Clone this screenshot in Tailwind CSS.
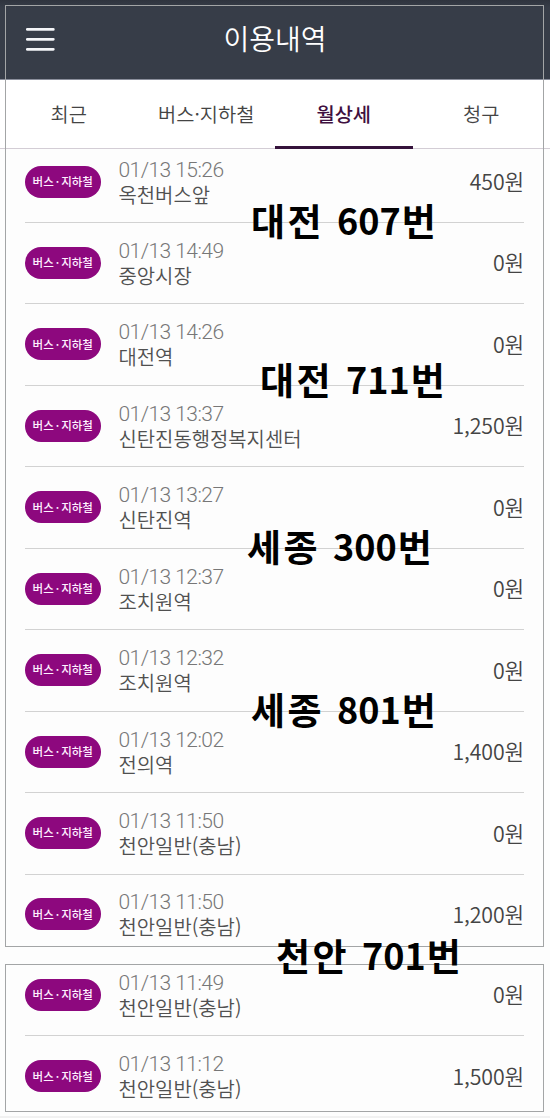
<!DOCTYPE html>
<html lang="ko">
<head>
<meta charset="utf-8">
<title>이용내역</title>
<script src="https://cdn.jsdelivr.net/npm/@tailwindcss/browser@4"></script>
</head>
<body class="bg-white font-['Noto_Sans_CJK_KR',sans-serif]">
<div class="relative h-[1118px] w-[550px] overflow-hidden bg-[#fdfdfd]">
  <header class="relative flex h-20 items-center justify-center border-b border-[#8b8f9c] bg-linear-to-b from-[#2f343e] from-0% via-[#373d48] via-10% to-[#373d48] pb-[3px]">
    <svg class="absolute left-[26px] top-[27px]" width="29" height="25" viewBox="0 0 29 25" stroke="#f4f5f8" stroke-width="2.8" stroke-linecap="round"><path d="M1.3 2.4H27.3M1.3 12.3H27.3M1.3 22.3H27.3"/></svg>
    <h1 class="text-[28px] leading-none font-[350] text-white">이용내역</h1>
  </header>
  <nav class="flex h-[69px] border-b border-[#d3cdd5] bg-white text-[19.8px] text-[#444]">
    <div class="flex w-[137.5px] items-center justify-center font-[350]">최근</div>
    <div class="flex w-[137.5px] items-center justify-center font-[350]">버스·지하철</div>
    <div class="relative flex w-[137.5px] items-center justify-center font-medium text-[#3f1040]">월상세<span class="absolute inset-x-0 -bottom-px h-[3px] bg-[#35123b]"></span></div>
    <div class="flex w-[137.5px] items-center justify-center font-[350]">청구</div>
  </nav>
  <main class="pl-[25px] pr-[26px]">
    <section id="first" class="h-[806px]"></section>
    <section id="second" class="h-[163px]"></section>
  </main>
  <div class="pointer-events-none absolute left-[5px] top-[5px] h-[942px] w-[539px] border border-[#a3a5a6]"></div>
  <div class="pointer-events-none absolute left-[5px] top-[964px] h-[148px] w-[539px] border border-[#a3a5a6]"></div>
  <div class="absolute inset-x-0 bottom-0 h-0.5 bg-[#f1f1f1]"></div>
  <div id="notes"></div>
</div>
<script>
const row = ([time, name, fee], cls) => `
<div class="${cls}">
  <span class="flex h-8 w-[75.5px] shrink-0 items-center justify-center rounded-full bg-[#8d087e] text-[11.5px] font-medium leading-none text-[#fff0ff]"><span class="whitespace-pre">버스<span class="mx-[2px]">·</span>지하철</span></span>
  <span class="ml-[18px] -mb-[9px] flex grow flex-col">
    <span class="font-[Roboto] text-[21px] leading-[25px] font-light tracking-[-0.55px] text-[#777]">${time}</span>
    <span class="text-[19.9px] leading-[24px] font-[350] text-[#505050]">${name}</span>
  </span>
  <span class="relative -top-[0.5px] text-[21.3px] leading-8 font-[350] tracking-[-0.1px] text-[#444]">${fee}</span>
</div>`;
const normal = "flex h-[81.45px] items-end border-b border-[#d2d2d2] pb-[24.5px]";
const top1 = "flex h-[74px] items-end border-b border-[#d2d2d2] pb-[24.5px]";
const last = "flex h-[81.4px] items-end pb-[25.5px]";
const a = [
  ["01/13 15:26","옥천버스앞","450원"],["01/13 14:49","중앙시장","0원"],["01/13 14:26","대전역","0원"],
  ["01/13 13:37","신탄진동행정복지센터","1,250원"],["01/13 13:27","신탄진역","0원"],["01/13 12:37","조치원역","0원"],
  ["01/13 12:32","조치원역","0원"],["01/13 12:02","전의역","1,400원"],["01/13 11:50","천안일반(충남)","0원"],
  ["01/13 11:50","천안일반(충남)","1,200원"]];
const b = [["01/13 11:49","천안일반(충남)","0원"],["01/13 11:12","천안일반(충남)","1,500원"]];
document.getElementById("first").innerHTML = a.map((r,i)=>row(r, i===0?top1:i===9?last:normal)).join("");
document.getElementById("second").innerHTML = b.map((r,i)=>row(r, i===1?last:normal)).join("");
const notes = [[251,220.5,"대전","607"],[260,379.5,"대전","711"],[247,546.5,"세종","300"],[251,709.5,"세종","801"],[276,955.5,"천안","701"]];
document.getElementById("notes").innerHTML = notes.map(([x,y,c,n])=>`
<div class="absolute flex h-12 items-center whitespace-nowrap text-[37px] leading-none font-bold text-black" style="left:${x}px;top:${y-24}px"><span class="tracking-[2.5px]">${c}</span><span class="relative -top-[1.5px] ml-[13px] text-[36px]">${n}</span><span class="ml-px">번</span></div>`).join("");
</script>
</body>
</html>
